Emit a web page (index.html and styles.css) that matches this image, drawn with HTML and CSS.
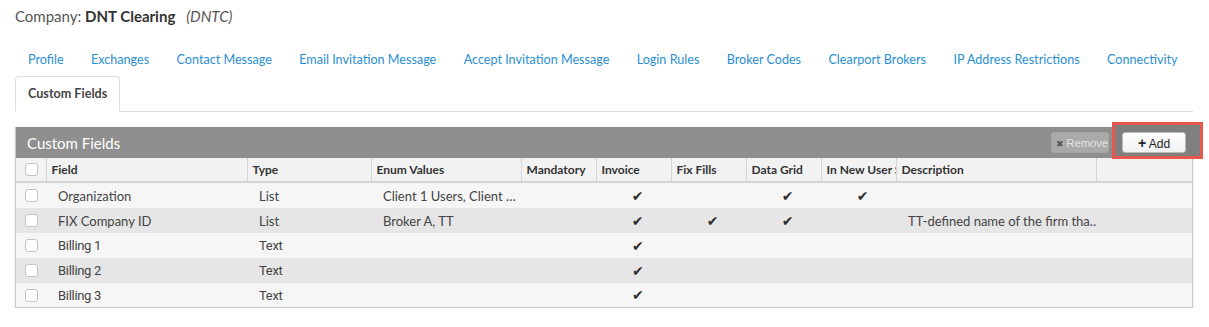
FILE: index.html
```html
<!DOCTYPE html>
<html lang="en">
<head>
  <meta charset="UTF-8" />
  <title>Company - Custom Fields</title>
  <link rel="stylesheet" href="styles.css">
</head>
<body>
  <div class="company">Company: <strong>DNT Clearing</strong> <em>(DNTC)</em></div>

  <ul class="tabs">
    <li><a href="#">Profile</a></li>
    <li><a href="#">Exchanges</a></li>
    <li><a href="#">Contact Message</a></li>
    <li><a href="#">Email Invitation Message</a></li>
    <li><a href="#">Accept Invitation Message</a></li>
    <li><a href="#">Login Rules</a></li>
    <li><a href="#">Broker Codes</a></li>
    <li><a href="#">Clearport Brokers</a></li>
    <li><a href="#">IP Address Restrictions</a></li>
    <li><a href="#">Connectivity</a></li>
    <li class="active"><a href="#">Custom Fields</a></li>
  </ul>

  <div class="panel">
    <div class="panel-head">
      <span class="panel-title">Custom Fields</span>
      <div class="panel-actions">
        <button class="btn btn-remove"><span class="ico">&#10006;</span> Remove</button>
        <div class="highlight">
          <button class="btn btn-add"><span class="plus">+</span> Add</button>
        </div>
      </div>
    </div>

    <table class="grid">
      <colgroup>
        <col style="width:30px"><col style="width:201px"><col style="width:124px"><col style="width:150px">
        <col style="width:75px"><col style="width:75px"><col style="width:75px"><col style="width:75px">
        <col style="width:75px"><col style="width:200px"><col>
      </colgroup>
      <thead>
        <tr>
          <th class="chk"><span class="box"></span></th>
          <th>Field</th>
          <th>Type</th>
          <th>Enum Values</th>
          <th>Mandatory</th>
          <th>Invoice</th>
          <th>Fix Fills</th>
          <th>Data Grid</th>
          <th><span class="clip">In New User Setup</span></th>
          <th>Description</th>
          <th></th>
        </tr>
      </thead>
      <tbody>
        <tr>
          <td class="chk"><span class="box"></span></td>
          <td>Organization</td>
          <td>List</td>
          <td>Client 1 Users, Client …</td>
          <td></td>
          <td class="tick">&#10004;</td>
          <td></td>
          <td class="tick">&#10004;</td>
          <td class="tick">&#10004;</td>
          <td></td>
          <td></td>
        </tr>
        <tr>
          <td class="chk"><span class="box"></span></td>
          <td>FIX Company ID</td>
          <td>List</td>
          <td>Broker A, TT</td>
          <td></td>
          <td class="tick">&#10004;</td>
          <td class="tick">&#10004;</td>
          <td class="tick">&#10004;</td>
          <td></td>
          <td>TT-defined name of the firm tha…</td>
          <td></td>
        </tr>
        <tr class="narrow">
          <td class="chk"><span class="box"></span></td>
          <td>Billing 1</td>
          <td>Text</td>
          <td></td>
          <td></td>
          <td class="tick">&#10004;</td>
          <td></td><td></td><td></td><td></td><td></td>
        </tr>
        <tr class="narrow">
          <td class="chk"><span class="box"></span></td>
          <td>Billing 2</td>
          <td>Text</td>
          <td></td>
          <td></td>
          <td class="tick">&#10004;</td>
          <td></td><td></td><td></td><td></td><td></td>
        </tr>
        <tr class="narrow">
          <td class="chk"><span class="box"></span></td>
          <td>Billing 3</td>
          <td>Text</td>
          <td></td>
          <td></td>
          <td class="tick">&#10004;</td>
          <td></td><td></td><td></td><td></td><td></td>
        </tr>
      </tbody>
    </table>
  </div>
</body>
</html>
```

FILE: styles.css
```css
body {
  margin: 0;
  padding: 0 16px 0 15px;
  font-family: Lato, "Open Sans", sans-serif;
  color: #444;
  background: #fff;
}

.company {
  height: 32px;
  line-height: 32px;
  font-size: 15px;
  color: #555;
}
.company strong { color: #333; }
.company em { margin-left: 7px; }

/* links run on one line; the active tab wraps below them */
.tabs {
  list-style: none;
  margin: 10px 0 0;
  padding: 0;
  display: flex;
  flex-wrap: wrap;
  border-bottom: 1px solid #ddd;
}
.tabs li {
  height: 34px;
  white-space: nowrap;
  flex: none;
}
.tabs a {
  display: block;
  padding: 1px 14.4px 0 13px;
  line-height: 33px;
  font-size: 12.6px;
  color: #2a8fd2;
  text-decoration: none;
}
.tabs li.active {
  border: 1px solid #ddd;
  border-bottom-color: #fff;
  border-radius: 4px 4px 0 0;
  margin-bottom: -1px;
  height: 34px;
}
.tabs li.active a {
  color: #444;
  font-weight: bold;
  padding: 0 12px;
  line-height: 34px;
}

.panel {
  margin-top: 15px;
  border: 1px solid #c9c9c9;
  border-top: none;
  box-shadow: 0 1px 3px rgba(0, 0, 0, 0.12);
}
.panel-head {
  height: 31px;
  background: #8f8f8f;
  display: flex;
  align-items: center;
  justify-content: space-between;
  padding-left: 11px;
}
.panel-title {
  color: #fff;
  font-size: 15px;
}
.panel-actions {
  display: flex;
  align-items: center;
  gap: 3px;
}

.btn {
  font-family: "Liberation Sans", Arial, sans-serif;
  font-size: 11px;
  height: 21px;
  border-radius: 3px;
  border: 1px solid #bbb;
  cursor: pointer;
  padding: 0;
}
.btn-remove {
  width: 58px;
  background: #a9a9a9;
  border-color: #a3a3a3;
  color: #e2e2e2;
  font-size: 11.5px;
  letter-spacing: -0.2px;
  white-space: nowrap;
  overflow: hidden;
  padding-left: 4px;
  text-align: left;
}
.btn-remove .ico {
  font-family: "DejaVu Sans", sans-serif;
  font-size: 9px;
  color: #555;
}
.highlight {
  border: 3px solid #e8574b;
  background: #7f7f7f;
  padding: 7px 14px 3px 7px;
  margin-right: -11px;
  position: relative;
  top: -2px;
}
.btn-add {
  width: 64px;
  background: linear-gradient(#fff, #f0f0f0);
  color: #222;
  display: block;
  font-size: 12px;
}
.btn-add .plus {
  font-weight: bold;
  font-size: 14px;
}

.grid {
  width: 100%;
  border-collapse: collapse;
  table-layout: fixed;
  font-size: 13px;
}
.grid th {
  height: 23px;
  background: #f2f2f2;
  border-right: 1px solid #d5d5d5;
  border-bottom: 2px solid #d5d5d5;
  text-align: left;
  font-size: 12px;
  color: #333;
  padding: 0 0 0 5px;
  white-space: nowrap;
  overflow: hidden;
}
.grid th:last-child { border-right: none; }
.grid th .clip {
  display: block;
  overflow: hidden;
}
.grid td {
  height: 25px;
  padding: 0 0 0 12px;
  white-space: nowrap;
  overflow: hidden;
  color: #444;
}
.grid tbody tr:nth-child(odd) td { background: #f6f6f6; }
.grid tbody tr:nth-child(even) td { background: #e6e6e6; }
.grid tbody tr:last-child td { height: 24px; }
.grid .narrow td {
  font-family: Roboto, sans-serif;
  letter-spacing: -0.3px;
}

.grid .chk {
  padding: 0 0 0 9px;
}
.box {
  display: block;
  width: 11px;
  height: 11px;
  border: 1px solid #c4c4c4;
  border-radius: 3px;
  background: #fff;
}
.grid .tick {
  text-align: center;
  padding: 0 0 0 8px;
  font-family: "DejaVu Sans", sans-serif;
  font-size: 14px;
  color: #2e2e2e;
}
```
